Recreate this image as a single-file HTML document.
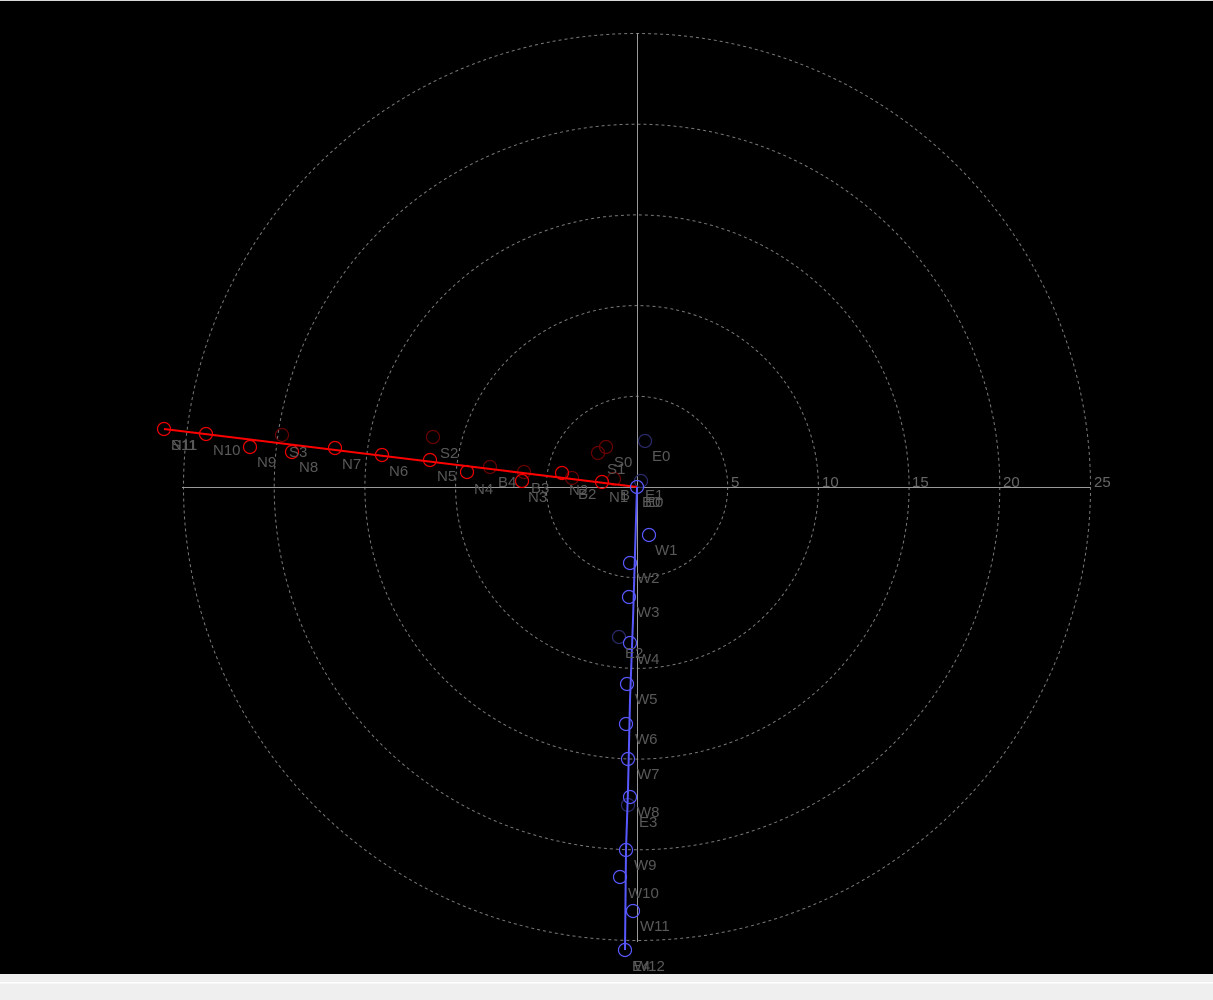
<!DOCTYPE html>
<html><head><meta charset="utf-8"><style>
html,body{margin:0;padding:0;width:1213px;height:1000px;overflow:hidden;background:#efefef}
svg{position:absolute;left:0;top:0}
</style></head><body>
<svg width="1213" height="1000" xmlns="http://www.w3.org/2000/svg" font-family="Liberation Sans, sans-serif" font-size="15">
<rect x="0" y="0" width="1213" height="1" fill="#d8d8d8"/>
<rect x="0" y="1" width="1213" height="973" fill="#000"/>
<rect x="0" y="982" width="1213" height="1.5" fill="#fff"/>
<g fill="none" stroke="#7a7a7a" stroke-width="1" stroke-dasharray="3,3">
<circle cx="637" cy="487" r="90.7"/>
<circle cx="637" cy="487" r="181.4"/>
<circle cx="637" cy="487" r="272.1"/>
<circle cx="637" cy="487" r="362.8"/>
<circle cx="637" cy="487" r="453.5"/>
</g>
<line x1="182" y1="487.5" x2="1090" y2="487.5" stroke="#999" stroke-width="1"/>
<line x1="637.5" y1="33" x2="637.5" y2="942" stroke="#999" stroke-width="1"/>
<g fill="#666">
<text x="731" y="487">5</text><text x="822" y="487">10</text><text x="912" y="487">15</text><text x="1003" y="487">20</text><text x="1094" y="487">25</text>
</g>
<g fill="none" stroke="#6a0000" stroke-width="1.2">
<circle cx="282" cy="435" r="6.5"/><circle cx="433" cy="437" r="6.5"/><circle cx="490" cy="467" r="6.5"/>
<circle cx="524" cy="472" r="6.5"/><circle cx="572" cy="478" r="6.5"/><circle cx="614" cy="479" r="6.5"/>
<circle cx="598" cy="453" r="6.5"/><circle cx="606" cy="447" r="6.5"/>
</g>
<g fill="none" stroke="#2a2a6a" stroke-width="1.2">
<circle cx="645" cy="441" r="6.5"/><circle cx="641" cy="481" r="6.5"/><circle cx="619" cy="637" r="6.5"/><circle cx="628" cy="805" r="6.5"/>
</g>
<polyline points="164,429 637,487" fill="none" stroke="#f00" stroke-width="2"/>
<g fill="none" stroke="#e00" stroke-width="1.2">
<circle cx="164" cy="429" r="6.5"/><circle cx="206" cy="434" r="6.5"/><circle cx="250" cy="447" r="6.5"/>
<circle cx="292" cy="452" r="6.5"/><circle cx="335" cy="448" r="6.5"/><circle cx="382" cy="455" r="6.5"/>
<circle cx="430" cy="460" r="6.5"/><circle cx="467" cy="472" r="6.5"/><circle cx="522" cy="481" r="6.5"/>
<circle cx="562" cy="473" r="6.5"/><circle cx="602" cy="482" r="6.5"/>
</g>
<polyline points="637,487 633,620 630,700 628,790 626,850 625,950" fill="none" stroke="#5858ff" stroke-width="2"/>
<g fill="none" stroke="#5858ff" stroke-width="1.2">
<circle cx="637" cy="487" r="6.5"/><circle cx="649" cy="535" r="6.5"/><circle cx="630" cy="563" r="6.5"/>
<circle cx="629" cy="597" r="6.5"/><circle cx="630" cy="643" r="6.5"/><circle cx="627" cy="684" r="6.5"/>
<circle cx="626" cy="724" r="6.5"/><circle cx="628" cy="759" r="6.5"/><circle cx="630" cy="797" r="6.5"/>
<circle cx="626" cy="850" r="6.5"/><circle cx="620" cy="877" r="6.5"/><circle cx="633" cy="911" r="6.5"/>
<circle cx="625" cy="950" r="6.5"/>
</g>
<g fill="#595959">
<text x="171" y="450">S11</text><text x="171" y="450">N11</text>
<text x="213" y="455">N10</text><text x="257" y="467">N9</text><text x="289" y="457">S3</text>
<text x="299" y="472">N8</text><text x="342" y="469">N7</text><text x="389" y="476">N6</text>
<text x="440" y="458">S2</text><text x="437" y="481">N5</text><text x="474" y="494">N4</text>
<text x="498" y="487">B4</text><text x="528" y="502">N3</text><text x="531" y="493">B3</text>
<text x="569" y="495">N2</text><text x="578" y="499">B2</text><text x="609" y="502">N1</text>
<text x="620" y="500">B</text><text x="614" y="467">S0</text><text x="607" y="474">S1</text>
<text x="652" y="461">E0</text><text x="645" y="500">E1</text><text x="642" y="507">B0</text><text x="645" y="507">E0</text>
<text x="655" y="555">W1</text><text x="637" y="583">W2</text><text x="637" y="617">W3</text>
<text x="625" y="658">E2</text><text x="637" y="664">W4</text><text x="635" y="704">W5</text>
<text x="635" y="744">W6</text><text x="637" y="779">W7</text><text x="637" y="817">W8</text>
<text x="639" y="827">E3</text><text x="634" y="870">W9</text><text x="628" y="898">W10</text>
<text x="640" y="931">W11</text><text x="632" y="971">E4</text><text x="634" y="971">W12</text>
</g>
</svg>
</body></html>
